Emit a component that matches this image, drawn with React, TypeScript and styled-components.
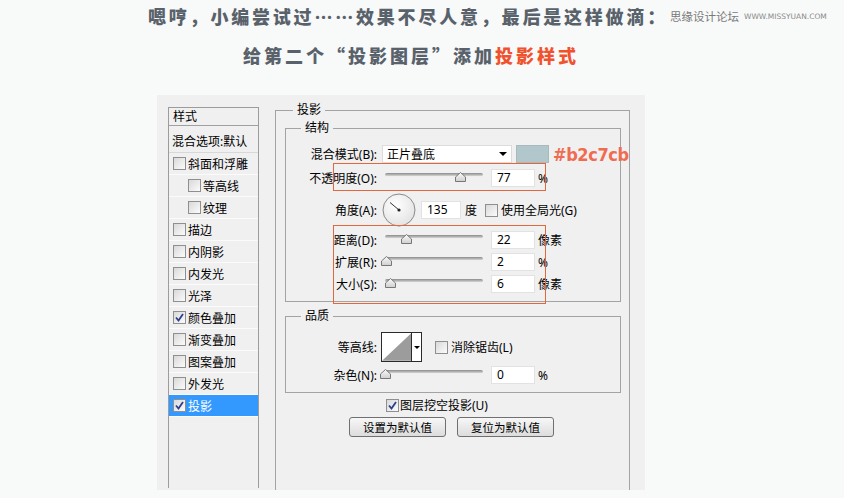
import React from "react";
import styled, { createGlobalStyle } from "styled-components";

const GlobalStyle = createGlobalStyle`
  html, body {
    margin: 0;
    padding: 0;
    background: #f8f9f9;
  }
  * {
    box-sizing: border-box;
  }
`;

const Page = styled.div`
  width: 844px;
  height: 498px;
  overflow: hidden;
  background: #f8f9f9;
  font-family: "Noto Sans", "Noto Sans CJK SC", sans-serif;
`;

const Header = styled.header`
  height: 71px;
`;

const TitleRow = styled.div`
  display: flex;
  align-items: center;
  height: 32px;
  padding-left: 148px;
`;

const Title = styled.h1`
  margin: 0;
  font-family: "Noto Sans CJK SC", sans-serif;
  font-size: 18px;
  font-weight: 900;
  letter-spacing: 2.8px;
  color: #59626b;
  white-space: nowrap;
`;

const SubTitleRow = styled(TitleRow)`
  margin-top: 7px;
  padding-left: 243px;
`;

const SubTitle = styled(Title)`
  letter-spacing: 3px;
`;

const Accent = styled.span`
  color: #f0522e;
`;

const Watermark = styled.div`
  display: flex;
  align-items: center;
  gap: 5px;
  margin-left: 2px;
  font-family: "Noto Sans CJK SC", sans-serif;
  font-size: 11.5px;
  color: #7a7a7a;
  white-space: nowrap;
`;

const WatermarkUrl = styled.span`
  font-family: "DejaVu Sans", sans-serif;
  font-size: 7.5px;
  color: #8a8a8a;
`;

const Dialog = styled.section`
  position: relative;
  display: flex;
  align-items: stretch;
  width: 488px;
  height: 395px;
  margin: 24px 0 0 157px;
  padding-left: 11px;
  background: #f0f0f0;
  font-size: 12px;
  color: #000;
`;

/* ---------- left style list ---------- */

const StyleList = styled.div`
  width: 91px;
  margin: 12px 0 2px;
  border: 1px solid #9c9c9c;
  border-bottom: none;
  flex-shrink: 0;
`;

const ListHeader = styled.div`
  height: 18px;
  line-height: 17px;
  padding-left: 4px;
  border-bottom: 1px solid #a0a0a0;
`;

const BlendItem = styled.div`
  display: flex;
  align-items: center;
  height: 27px;
  padding: 3px 0 0 3px;
  border-bottom: 1px solid #d8d8d8;
`;

const ListItem = styled.div<{ $indent?: boolean; $active?: boolean }>`
  display: flex;
  align-items: center;
  gap: 2px;
  height: 22px;
  padding-left: ${(p) => (p.$indent ? 19 : 4)}px;
  border-bottom: 1px solid #fbfbfb;
  background: ${(p) => (p.$active ? "#3399ff" : "transparent")};
  color: ${(p) => (p.$active ? "#fff" : "#000")};
`;

/* ---------- fieldsets ---------- */

const OuterGroup = styled.fieldset`
  margin: 7px 0 0 16px;
  min-width: 0;
  width: 355px;
  padding: 0 8px 0 9px;
  border: 1px solid #a3a3a3;
  border-bottom: none;
`;

const InnerGroup = styled.fieldset<{ $gap?: number }>`
  margin: ${(p) => p.$gap ?? 2}px 0 0;
  min-width: 0;
  padding: 8px 0 ${(p) => (p.$gap ? 4 : 5)}px;
  border: 1px solid #a3a3a3;
`;

const Legend = styled.legend<{ $offset: number }>`
  margin-left: ${(p) => p.$offset}px;
  padding: 0 4px;
  height: 16px;
  line-height: 16px;
  font-size: 12px;
`;

const Row = styled.div<{ $h: number }>`
  display: flex;
  align-items: center;
  height: ${(p) => p.$h}px;
  white-space: nowrap;
  & > * {
    flex-shrink: 0;
  }
`;

const Label = styled.span`
  width: 91px;
  text-align: right;
`;

const Select = styled.div`
  display: flex;
  align-items: center;
  justify-content: space-between;
  width: 130px;
  height: 18px;
  margin-left: 5px;
  padding: 0 4px;
  background: #fff;
  border: 1px solid #dcdcdc;
`;

const Arrow = styled.span`
  width: 0;
  height: 0;
  border-left: 4px solid transparent;
  border-right: 4px solid transparent;
  border-top: 4px solid #000;
`;

const Swatch = styled.div`
  width: 33px;
  height: 18px;
  margin-left: 4px;
  background: #b2c7cb;
  border: 1px solid #a9b9bc;
`;

const HexNote = styled.span`
  margin-left: 4px;
  font-family: "DejaVu Sans Condensed", "DejaVu Sans", sans-serif;
  font-weight: bold;
  font-size: 18px;
  letter-spacing: -0.4px;
  color: #ee6c50;
`;

const Field = styled.div<{ $w?: number; $ml?: number }>`
  width: ${(p) => p.$w ?? 44}px;
  height: 18px;
  margin-left: ${(p) => p.$ml ?? 8}px;
  padding-left: 5px;
  line-height: 16px;
  background: #fff;
  border: 1px solid #e2e2e2;
`;

const Unit = styled.span<{ $ml?: number }>`
  margin-left: ${(p) => p.$ml ?? 3}px;
`;

const SliderBox = styled.div`
  position: relative;
  width: 98px;
  height: 14px;
  margin-left: 8px;
`;

const Track = styled.div`
  position: absolute;
  left: 0;
  right: 0;
  top: 2px;
  height: 4px;
  border-radius: 2px;
  background: linear-gradient(#8a8a8a, #d4d4d4);
  border-bottom: 1px solid #eee;
`;

const Thumb = styled.svg`
  position: absolute;
  top: 1px;
  width: 11px;
  height: 10px;
`;

const CheckBox = styled.span<{ $ml?: number }>`
  display: inline-flex;
  align-items: center;
  justify-content: center;
  width: 13px;
  height: 13px;
  margin-left: ${(p) => p.$ml ?? 0}px;
  flex-shrink: 0;
  border: 1px solid #8e8f8f;
  background: linear-gradient(135deg, #d9d9d9, #fbfbfb);
`;

const CheckText = styled.span<{ $ml?: number }>`
  margin-left: ${(p) => p.$ml ?? 3}px;
`;

const DialBox = styled.svg`
  width: 34px;
  height: 34px;
  margin-left: 5px;
`;

const Contour = styled.div`
  display: flex;
  width: 41px;
  height: 30px;
  margin-left: 4px;
  background: #fff;
  border: 1px solid #2a2a2a;
`;

const ContourDrop = styled.div`
  display: flex;
  align-items: center;
  justify-content: center;
  width: 10px;
  border-left: 1px solid #2a2a2a;
`;

const SmallArrow = styled(Arrow)`
  border-left-width: 3px;
  border-right-width: 3px;
  border-top-width: 3px;
`;

const KnockRow = styled(Row)`
  margin-top: 2px;
  padding-left: 101px;
`;

const ButtonRow = styled.div`
  display: flex;
  gap: 11px;
  margin-top: 2px;
  padding-left: 64px;
`;

const Button = styled.button`
  width: 97px;
  height: 20px;
  padding: 0;
  border: 1px solid #707070;
  border-radius: 3px;
  background: linear-gradient(#f7f7f7, #dcdcdc);
  font-family: "Noto Sans CJK SC", sans-serif;
  font-size: 11.5px;
  line-height: 17px;
  color: #000;
`;

const Mark = styled.div<{ $top: number; $h: number }>`
  position: absolute;
  left: 176px;
  top: ${(p) => p.$top}px;
  width: 213px;
  height: ${(p) => p.$h}px;
  border: 1px solid #e2673f;
  pointer-events: none;
`;

/* ---------- small parts ---------- */

function Check({ checked, ml }: { checked?: boolean; ml?: number }) {
  return (
    <CheckBox $ml={ml}>
      {checked && (
        <svg width="9" height="9" viewBox="0 0 9 9">
          <polyline
            points="1,4.5 3.5,7.5 8,1"
            fill="none"
            stroke="#2d3f8c"
            strokeWidth="1.8"
          />
        </svg>
      )}
    </CheckBox>
  );
}

function Slider({ value }: { value: number }) {
  const left = (value / 100) * 98 - 5.5;
  return (
    <SliderBox>
      <Track />
      <Thumb viewBox="0 0 11 10" style={{ left }}>
        <defs>
          <linearGradient id="th" x1="0" y1="0" x2="0" y2="1">
            <stop offset="0" stopColor="#fafafa" />
            <stop offset="1" stopColor="#cfcfcf" />
          </linearGradient>
        </defs>
        <polygon
          points="5.5,0.5 10.5,5 10.5,9.5 0.5,9.5 0.5,5"
          fill="url(#th)"
          stroke="#777"
          strokeWidth="1"
        />
      </Thumb>
    </SliderBox>
  );
}

function Dial() {
  return (
    <DialBox viewBox="0 0 34 34">
      <defs>
        <radialGradient id="dl" cx="0.4" cy="0.35" r="0.7">
          <stop offset="0" stopColor="#ffffff" />
          <stop offset="1" stopColor="#e2e2e2" />
        </radialGradient>
      </defs>
      <circle cx="17" cy="17" r="16" fill="url(#dl)" stroke="#8a8a8a" />
      <line x1="17" y1="17" x2="8" y2="9.5" stroke="#333" strokeWidth="1" />
      <circle cx="17" cy="17" r="1.6" fill="#222" />
    </DialBox>
  );
}

const styleItems = [
  { name: "斜面和浮雕" },
  { name: "等高线", indent: true },
  { name: "纹理", indent: true },
  { name: "描边" },
  { name: "内阴影" },
  { name: "内发光" },
  { name: "光泽" },
  { name: "颜色叠加", checked: true },
  { name: "渐变叠加" },
  { name: "图案叠加" },
  { name: "外发光" },
  { name: "投影", checked: true, active: true },
];

const sliders = [
  { label: "距离(D):", value: 22, unit: "像素", h: 24 },
  { label: "扩展(R):", value: 2, unit: "%", h: 20 },
  { label: "大小(S):", value: 6, unit: "像素", h: 24 },
];

export default function App() {
  return (
    <Page>
      <GlobalStyle />
      <Header>
        <TitleRow>
          <Title>嗯哼，小编尝试过……效果不尽人意，最后是这样做滴：</Title>
          <Watermark>
            思缘设计论坛
            <WatermarkUrl>WWW.MISSYUAN.COM</WatermarkUrl>
          </Watermark>
        </TitleRow>
        <SubTitleRow>
          <SubTitle>
            给第二个“投影图层”添加<Accent>投影样式</Accent>
          </SubTitle>
        </SubTitleRow>
      </Header>

      <Dialog>
        <StyleList>
          <ListHeader>样式</ListHeader>
          <BlendItem>混合选项:默认</BlendItem>
          {styleItems.map((it) => (
            <ListItem key={it.name} $indent={it.indent} $active={it.active}>
              <Check checked={it.checked} />
              {it.name}
            </ListItem>
          ))}
        </StyleList>

        <OuterGroup>
          <Legend $offset={8}>投影</Legend>
          <InnerGroup>
            <Legend $offset={15}>结构</Legend>
            <Row $h={20}>
              <Label>混合模式(B):</Label>
              <Select>
                正片叠底
                <Arrow />
              </Select>
              <Swatch />
              <HexNote>#b2c7cb</HexNote>
            </Row>
            <Row $h={28}>
              <Label>不透明度(O):</Label>
              <Slider value={77} />
              <Field>77</Field>
              <Unit>%</Unit>
            </Row>
            <Row $h={36}>
              <Label>角度(A):</Label>
              <Dial />
              <Field $w={40} $ml={5}>135</Field>
              <Unit $ml={4}>度</Unit>
              <Check ml={8} />
              <CheckText>使用全局光(G)</CheckText>
            </Row>
            {sliders.map((s) => (
              <Row $h={s.h} key={s.label}>
                <Label>{s.label}</Label>
                <Slider value={s.value} />
                <Field>{s.value}</Field>
                <Unit>{s.unit}</Unit>
              </Row>
            ))}
          </InnerGroup>

          <InnerGroup $gap={6}>
            <Legend $offset={15}>品质</Legend>
            <Row $h={30}>
              <Label>等高线:</Label>
              <Contour>
                <svg width="30" height="28" viewBox="0 0 30 28">
                  <polygon points="0,28 30,0 30,28" fill="#9c9c9c" />
                </svg>
                <ContourDrop>
                  <SmallArrow />
                </ContourDrop>
              </Contour>
              <Check ml={13} />
              <CheckText>消除锯齿(L)</CheckText>
            </Row>
            <Row $h={26}>
              <Label>杂色(N):</Label>
              <Slider value={0} />
              <Field>0</Field>
              <Unit>%</Unit>
            </Row>
          </InnerGroup>

          <KnockRow $h={20}>
            <Check checked />
            <CheckText $ml={1}>图层挖空投影(U)</CheckText>
          </KnockRow>
          <ButtonRow>
            <Button>设置为默认值</Button>
            <Button>复位为默认值</Button>
          </ButtonRow>
        </OuterGroup>

        <Mark $top={68} $h={28} />
        <Mark $top={130} $h={79} />
      </Dialog>
    </Page>
  );
}
